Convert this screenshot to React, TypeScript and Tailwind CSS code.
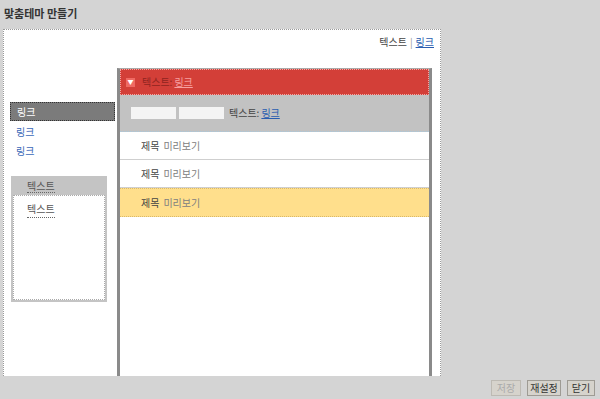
const font = "font-['Noto_Sans_CJK_KR','Noto_Sans',sans-serif]";

const rows = [
  { id: 1, active: false },
  { id: 2, active: false },
  { id: 3, active: true },
];

function Row({ active }: { active: boolean }) {
  return (
    <div
      className={
        active
          ? 'h-[29px] flex items-center pl-[21px] bg-[#ffdf8c] border-y border-dotted border-[#d9b96a]'
          : 'h-[28px] flex items-center pl-[21px] bg-white border-b border-[#cfcfcf]'
      }
    >
      <span className="text-[#444]">제목</span>
      <span className="ml-[4px] text-[#808080]">미리보기</span>
    </div>
  );
}

export default function App() {
  return (
    <div className={`w-[600px] h-[399px] bg-[#d4d4d4] overflow-hidden text-[10px] leading-none ${font}`}>
      <div className="h-[29px] pl-[4px] pt-[8px] text-[11px] font-bold text-[#333]">맞춤테마 만들기</div>

      <div className="ml-[3px] w-[438px] h-[347px] bg-white border border-b-0 border-dotted border-[#9a9a9a] flex flex-col">
        <div className="h-[38px] flex justify-end items-start pt-[7px] pr-[6px] text-[#444]">
          <span>텍스트</span>
          <span className="mx-[3px] text-[#999]">|</span>
          <span className="text-[#2a5db0] underline">링크</span>
        </div>

        <div className="flex flex-1 min-h-0">
          <div className="w-[113px] pt-[34px] flex flex-col">
            <div className="ml-[6px] w-[105px] h-[19px] flex items-center pl-[6px] bg-[#7b7b7b] border border-dotted border-[#333] text-white">
              링크
            </div>
            <div className="ml-[12px] mt-[6px] text-[#3a68b8]">링크</div>
            <div className="ml-[12px] mt-[9px] text-[#3a68b8]">링크</div>

            <div className="ml-[7px] mt-[20px] w-[96px] h-[126px] bg-[#c4c4c4] p-[2px] flex flex-col">
              <div className="h-[17px] flex items-center pl-[14px] text-[#555]">
                <span className="border-b border-dotted border-[#666] pb-[1px]">텍스트</span>
              </div>
              <div className="flex-1 bg-white border border-dotted border-[#aaa] pl-[13px] pt-[8px] text-[#555]">
                <span className="border-b border-dotted border-[#666] pb-[1px]">텍스트</span>
              </div>
            </div>
          </div>

          <div className="w-[315px] border-x-[3px] border-t border-[#8a8a8a] border-t-[#aaa] flex flex-col bg-white">
            <div className="h-[26px] bg-[#d33f38] border border-dotted border-[#f3a8a4] flex items-center pl-[5px]">
              <div className="w-[9px] h-[9px] bg-[#ef6a63] flex items-center justify-center text-white text-[6px]">▼</div>
              <span className="ml-[7px] text-[#8f2420]">텍스트:</span>
              <span className="ml-[2px] text-[#f6a0a0] underline">링크</span>
            </div>
            <div className="h-[37px] bg-[#c2c2c2] border-b border-dotted border-[#a9c8dc] flex items-center pl-[11px]">
              <div className="w-[45px] h-[12px] bg-[#f4f4f4]" />
              <div className="ml-[3px] w-[45px] h-[12px] bg-[#f4f4f4]" />
              <span className="ml-[5px] text-[#444]">텍스트:</span>
              <span className="ml-[2px] text-[#2a5db0] underline">링크</span>
            </div>
            {rows.map((r) => (
              <Row key={r.id} active={r.active} />
            ))}
          </div>
        </div>
      </div>

      <div className="flex justify-end gap-[6px] pr-[5px] pt-[4px]">
        <div className="w-[30px] h-[16px] flex items-center justify-center bg-[#d6d3cc] border border-[#bdbab3] text-[#aaa]">저장</div>
        <div className="w-[34px] h-[16px] flex items-center justify-center bg-[#d6d3cc] border border-[#9e9b94] text-[#333]">재설정</div>
        <div className="w-[28px] h-[16px] flex items-center justify-center bg-[#d6d3cc] border border-[#9e9b94] text-[#333]">닫기</div>
      </div>
    </div>
  );
}
